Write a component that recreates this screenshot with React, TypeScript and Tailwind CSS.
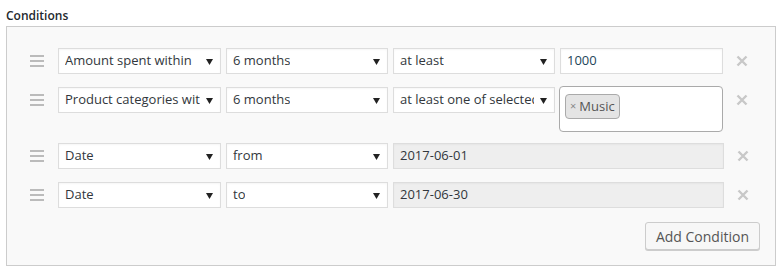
import React from "react";

const font = { fontFamily: '"Open Sans", "Noto Sans", Arial, sans-serif' };

const Handle = () => (
    <div className="flex flex-col justify-center gap-[3px] w-[14px] h-[26px] shrink-0">
        <span className="block h-[2px] bg-[#bbbbbb]" />
        <span className="block h-[2px] bg-[#bbbbbb]" />
        <span className="block h-[2px] bg-[#bbbbbb]" />
    </div>
);

const Remove = () => (
    <div className="w-[12px] h-[26px] flex items-center justify-center shrink-0 text-[#c8c8c8]">
        <svg width="12" height="12" viewBox="0 0 12 12">
            <path d="M1.5 1.5 L10.5 10.5 M10.5 1.5 L1.5 10.5" stroke="currentColor" strokeWidth="2.4" />
        </svg>
    </div>
);

const Select = ({ value, w }: { value: string; w: string }) => (
    <div
        className={
            "relative h-[26px] shrink-0 bg-white border border-[#dddddd] shadow-[inset_0_1px_2px_rgba(0,0,0,0.04)] flex items-center pl-[6px] pr-[20px] text-[13px] text-[#32373c] overflow-hidden whitespace-nowrap " +
            w
        }
    >
        <span className="overflow-hidden">{value}</span>
        <svg
            className="absolute right-[7px] top-[10px]"
            width="7"
            height="6"
            viewBox="0 0 7 6"
        >
            <path d="M0 0 H7 L3.5 6 Z" fill="#222" />
        </svg>
    </div>
);

const TextInput = ({ value, disabled, wide }: { value: string; disabled?: boolean; wide?: boolean }) => (
    <div
        className={
            "h-[26px] shrink-0 border border-[#dddddd] flex items-center pl-[6px] text-[13px] shadow-[inset_0_1px_2px_rgba(0,0,0,0.04)] " +
            (wide ? "w-[331px] " : "w-[163px] ") +
            (disabled ? "bg-[#eeeeee] text-[#32373c]" : "bg-white text-[#23465a]")
        }
    >
        {value}
    </div>
);

export default function App() {
    return (
        <div className="w-[782px] h-[276px] bg-white pl-[6px] pt-[6px]" style={font}>
            <div className="h-[20px] text-[12px] font-semibold text-[#23282d] leading-[20px]">
                Conditions
            </div>
            <div className="w-[770px] h-[240px] border border-[#cccccc] bg-[#f9f9f9] pt-[21px] pl-[23px]">
                <div className="flex flex-col">
                    {/* row 1 */}
                    <div className="flex items-start">
                        <Handle />
                        <div className="flex gap-[5px] ml-[14px]">
                            <Select value="Amount spent within" w="w-[163px]" />
                            <Select value="6 months" w="w-[162px]" />
                            <Select value="at least" w="w-[162px]" />
                            <TextInput value="1000" />
                        </div>
                        <div className="ml-[13px]">
                            <Remove />
                        </div>
                    </div>

                    {/* row 2 */}
                    <div className="flex items-start mt-[13px]">
                        <Handle />
                        <div className="flex gap-[5px] ml-[14px] items-start">
                            <Select value="Product categories with" w="w-[163px]" />
                            <Select value="6 months" w="w-[162px]" />
                            <Select value="at least one of selected" w="w-[162px]" />
                            <div className="w-[164px] h-[46px] -mt-[1px] -ml-[1px] bg-white border border-[#aaaaaa] rounded-[4px] p-[5px]">
                                <div className="inline-flex items-center h-[25px] px-[4px] bg-[#e4e4e4] border border-[#aaaaaa] rounded-[4px] text-[13px] text-[#555555]">
                                    <span className="text-[11px] mr-[3px] text-[#888888]">×</span>
                                    Music
                                </div>
                            </div>
                        </div>
                        <div className="ml-[13px]">
                            <Remove />
                        </div>
                    </div>

                    {/* row 3 */}
                    <div className="flex items-start mt-[11px]">
                        <Handle />
                        <div className="flex gap-[5px] ml-[14px]">
                            <Select value="Date" w="w-[163px]" />
                            <Select value="from" w="w-[162px]" />
                            <TextInput value="2017-06-01" disabled wide />
                        </div>
                        <div className="ml-[13px]">
                            <Remove />
                        </div>
                    </div>

                    {/* row 4 */}
                    <div className="flex items-start mt-[13px]">
                        <Handle />
                        <div className="flex gap-[5px] ml-[14px]">
                            <Select value="Date" w="w-[163px]" />
                            <Select value="to" w="w-[162px]" />
                            <TextInput value="2017-06-30" disabled wide />
                        </div>
                        <div className="ml-[13px]">
                            <Remove />
                        </div>
                    </div>

                    <div className="flex justify-end pr-[15px] mt-[14px]">
                        <button className="h-[28px] px-[10px] bg-[#f7f7f7] border border-[#cccccc] rounded-[3px] shadow-[0_1px_0_#cccccc] text-[14px] text-[#555555]">
                            Add Condition
                        </button>
                    </div>
                </div>
            </div>
        </div>
    );
}
